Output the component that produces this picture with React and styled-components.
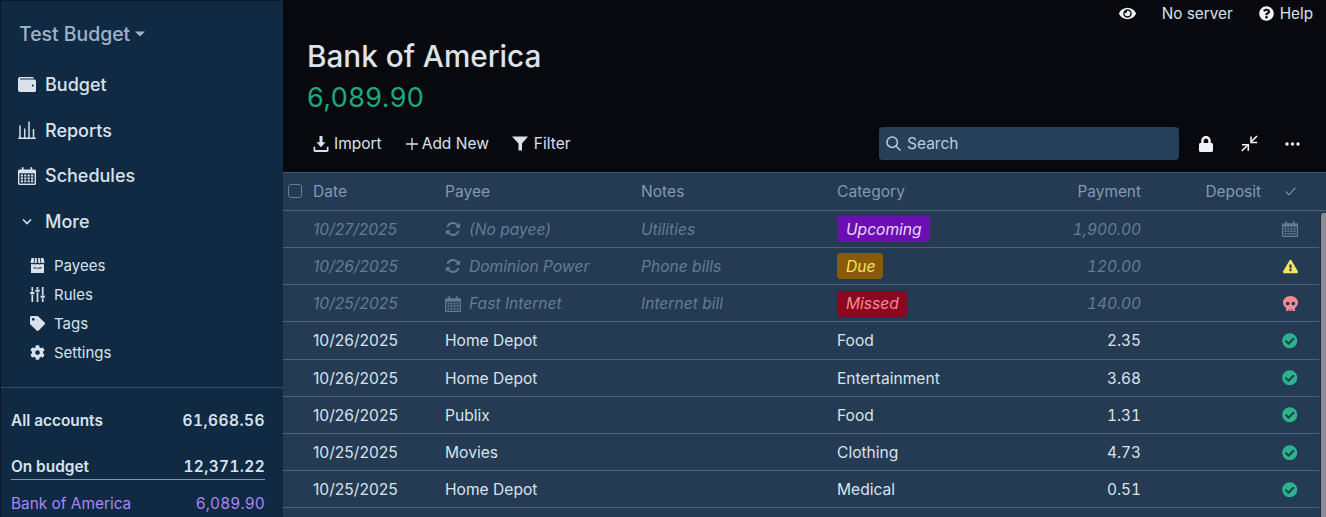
import React from "react";
import styled, { createGlobalStyle } from "styled-components";
import {
  FaEye,
  FaQuestionCircle,
  FaLock,
  FaTag,
  FaCog,
  FaCheckCircle,
  FaSkull,
  FaExclamationTriangle,
} from "react-icons/fa";

const GlobalStyle = createGlobalStyle`
  html, body {
    margin: 0;
    padding: 0;
    height: 100%;
    overflow: hidden;
    background: #08090f;
  }
  * { box-sizing: border-box; }
`;

const AppContainer = styled.div`
  font-family: Inter, "Noto Sans", sans-serif;
  display: flex;
  width: 1326px;
  height: 517px;
  overflow: hidden;
  background: #08090f;
`;

const Sidebar = styled.aside`
  width: 283px;
  flex: none;
  height: 100%;
  background: #102a43;
  border-left: 1px solid #0a1a2c;
  border-top: 1px solid #0a1a2c;
  display: flex;
  flex-direction: column;
`;

const BudgetName = styled.div`
  display: flex;
  align-items: center;
  gap: 5px;
  height: 45px;
  margin-top: 10px;
  padding-left: 18px;
  color: #9fb3c8;
  font-size: 19.4px;
  font-weight: 500;
`;

const NavList = styled.nav`
  display: flex;
  flex-direction: column;
  margin-top: 6px;
`;

const NavItem = styled.div`
  display: flex;
  align-items: center;
  height: 45.6px;
  padding-left: 17px;
  gap: 9px;
  color: #d9e2ec;
  font-size: 18px;
  font-weight: 500;
`;

const NavIcon = styled.span`
  width: 18px;
  height: 18px;
  display: flex;
  align-items: center;
  justify-content: center;
  color: #d9e2ec;
`;

const SubList = styled.div`
  display: flex;
  flex-direction: column;
  margin-top: 7px;
`;

const SubItem = styled.div`
  display: flex;
  align-items: center;
  height: 29px;
  padding-left: 29px;
  gap: 9px;
  color: #d9e2ec;
  font-size: 15px;
`;

const SubIcon = styled.span`
  width: 15px;
  height: 15px;
  display: flex;
  align-items: center;
  justify-content: center;
`;

const Accounts = styled.div`
  margin-top: 20px;
  border-top: 1px solid #334e68;
  padding: 20px 18px 0 10px;
  display: flex;
  flex-direction: column;
`;

const AccountRow = styled.div`
  display: flex;
  justify-content: space-between;
  align-items: center;
  height: ${(p) => p.$height || 24}px;
  margin-top: ${(p) => p.$top || 0}px;
  font-size: 15.4px;
  font-weight: ${(p) => (p.$bold ? 600 : 400)};
  color: ${(p) => (p.$active ? "#a985f5" : "#d9e2ec")};
  border-bottom: ${(p) => (p.$rule ? "1px solid #829ab1" : "none")};
`;

const Amount = styled.span`
  font-variant-numeric: tabular-nums;
  letter-spacing: ${(p) => p.$spacing}px;
`;

const Main = styled.main`
  flex: 1;
  min-width: 0;
  display: flex;
  flex-direction: column;
`;

const TopBar = styled.div`
  display: flex;
  justify-content: flex-end;
  align-items: center;
  height: 27px;
  color: #d9e2ec;
  font-size: 15.3px;
  padding-right: 13px;
`;

const TopIcon = styled.span`
  display: flex;
  margin-right: ${(p) => p.$gap}px;
  color: #f0f4f8;
`;

const ServerLabel = styled.span`
  margin-right: 26px;
`;

const Title = styled.h1`
  margin: 11px 0 0;
  padding-left: 24px;
  height: 36px;
  line-height: 36px;
  color: #dde3ea;
  font-size: 29.7px;
  font-weight: 500;
`;

const Balance = styled.div`
  padding-left: 24px;
  margin-top: 6px;
  height: 36px;
  line-height: 36px;
  color: #1ea97c;
  font-size: 27px;
  letter-spacing: 0.4px;
`;

const Toolbar = styled.div`
  display: flex;
  align-items: center;
  height: 33px;
  margin-top: 11px;
  padding: 0 24px 0 30px;
  color: #d9e2ec;
  font-size: 15.5px;
`;

const ToolButton = styled.span`
  display: flex;
  align-items: center;
  gap: ${(p) => p.$gap || 5}px;
  margin-right: ${(p) => p.$after || 23}px;
`;

const SearchBox = styled.div`
  margin-left: auto;
  width: 300px;
  height: 33px;
  border-radius: 4px;
  background: #27405a;
  display: flex;
  align-items: center;
  gap: 6px;
  padding-left: 7px;
  color: #bcccdc;
  font-size: 15.5px;
`;

const ToolIcons = styled.div`
  display: flex;
  align-items: center;
  margin-left: 19px;
  margin-right: 2px;
  gap: 27px;
  color: #f0f4f8;
`;

const Table = styled.div`
  margin-top: 12px;
  flex: 1;
  background: #243b53;
  border-top: 1px solid #3d5773;
  position: relative;
`;

const Row = styled.div`
  display: grid;
  grid-template-columns: 30px 132px 196px 196px 200px 104px 120px 58px;
  align-items: center;
  height: ${(p) => (p.$head ? 37.8 : 37.2)}px;
  padding-top: ${(p) => (p.$head ? 0 : 0.8)}px;
  margin-right: ${(p) => (p.$head ? 0 : 7)}px;
  border-bottom: 1px solid #48627f;
  font-size: 15.6px;
  font-style: ${(p) => (p.$dim ? "italic" : "normal")};
  color: ${(p) => (p.$head ? "#829ab1" : p.$dim ? "#627d98" : "#d9e2ec")};
`;

const Cell = styled.span`
  display: flex;
  align-items: center;
  gap: 8px;
  white-space: nowrap;
  font-size: ${(p) => (p.$right ? "15.4px" : "inherit")};
  font-variant-numeric: ${(p) => (p.$right ? "tabular-nums" : "normal")};
  justify-content: ${(p) => (p.$right ? "flex-end" : p.$center ? "center" : "flex-start")};
`;

const CheckBox = styled.span`
  width: 14px;
  height: 14px;
  margin-left: 5px;
  border: 1px solid #627d98;
  border-radius: 3px;
`;

const Pill = styled.span`
  padding: 2px 8px 2px 9px;
  border-radius: 4px;
  height: 26px;
  display: inline-flex;
  align-items: center;
  background: ${(p) => p.$bg};
  color: ${(p) => p.$fg};
`;

const Scrollbar = styled.div`
  position: absolute;
  right: 0;
  top: 40px;
  bottom: 0;
  width: 6px;
  border-left: 1px solid #1a2c40;
  background: #8a8d92;
  border-radius: 3px 0 0 0;
`;

const DimIcon = styled.span`
  display: flex;
  color: #627d98;
`;

const CheckedIcon = styled(FaCheckCircle)`
  color: #2bb389;
  font-size: 15.5px;
`;

const Wallet = () => (
  <svg width="18" height="15" viewBox="0 0 18 15" fill="currentColor">
    <path d="M2 0h13.500v1.600H2.400c-.5 0-.5.8 0 .8H16.500c.8 0 1.500.7 1.500 1.500V13.500c0 .8-.7 1.500-1.500 1.500H2C.9 15 0 14.100 0 13V2C0 .9.9 0 2 0z" />
    <circle cx="14.800" cy="8.600" r="1" fill="#102a43" />
  </svg>
);

const Bars = () => (
  <svg width="18" height="18" viewBox="0 0 18 18" fill="none" stroke="currentColor" strokeWidth="1.500">
    <path d="M.2 17.200h17.600M2 17V4.500M6.700 17V7.500M11 17V.5M15.500 17V8" />
  </svg>
);

const Calendar = ({ size = 18, hole = "#102a43" }) => (
  <svg width={size} height={size} viewBox="0 0 18 18" fill="currentColor">
    <path d="M3.800.2h1.800v2.300h6.800V.2h1.800v2.300h2.300c.8 0 1.500.7 1.500 1.500v12.500c0 .8-.7 1.500-1.500 1.500H1.500C.7 18 0 17.300 0 16.500V4c0-.8.7-1.500 1.500-1.500h2.300z" />
    <rect x="1.400" y="6.300" width="15.200" height="10.300" fill={hole} />
    {[2.800, 6.200, 9.600, 13].map((x) =>
      [7.500, 10.400, 13.300].map((y) => <rect key={`${x}-${y}`} x={x} y={y} width="2.200" height="2" />)
    )}
  </svg>
);

const Chevron = () => (
  <svg width="12" height="8" viewBox="0 0 12 8" fill="none" stroke="currentColor" strokeWidth="1.600">
    <path d="M2 1.500l4 4 4-4" />
  </svg>
);

const Store = () => (
  <svg width="15" height="15" viewBox="0 0 15 15" fill="currentColor">
    <path d="M1.500 0h2.800L3.700 4.500C2.900 5.400 1.300 5.400.5 4.500zM5.200 0h1.700v4.800c-.8.6-1.900.6-2.500 0zM8.100 0h1.700l.8 4.800c-.6.6-1.700.6-2.500 0zM10.700 0h2.800l1 4.500c-.8.9-2.400.9-3.200 0z" />
    <path fillRule="evenodd" d="M1 6.200c1 .3 1.900.2 2.700-.3.7.6 2.700.7 3.800 0 1.100.7 3.100.6 3.800 0 .8.500 1.700.6 2.700.3V15H1zM3.600 9v1.600h7.800V9.100c-2.400 1-5.400 1-7.800-.1z" />
  </svg>
);

const Sliders = () => (
  <svg width="15" height="15" viewBox="0 0 15 15" fill="none" stroke="currentColor" strokeWidth="1.700">
    <path d="M2.300 0v4.500M2.300 7.800V15M7.500 0v2M7.500 5.300V15M12.700 0v8M12.700 11.300V15" />
    <path d="M.2 6.100h4.200M5.400 3.600h4.200M10.600 9.600h4.200" strokeWidth="2.200" />
  </svg>
);

const Sync = () => (
  <svg width="16" height="16" viewBox="0 0 17 17" fill="none" stroke="currentColor" strokeWidth="2">
    <path d="M2.600 6.300A6.200 6.200 0 0 1 13.600 4.800M14.400 10.700A6.200 6.200 0 0 1 3.400 12.200" />
    <path d="M16 2v5.200h-5.200zM1 15V9.800h5.200z" fill="currentColor" stroke="none" />
  </svg>
);

const Download = () => (
  <svg width="16" height="16" viewBox="0 0 16 16" fill="currentColor">
    <path d="M6.500 0h3v6.200h3L8 11.200 3.500 6.200h3z" />
    <path d="M.5 10.800h1.700v3.200h11.600v-3.200h1.700v3.700c0 .8-.7 1.400-1.500 1.400H2c-.8 0-1.500-.6-1.500-1.400z" />
  </svg>
);

const Funnel = () => (
  <svg width="16" height="15" viewBox="0 0 16 15" fill="currentColor">
    <path d="M0 .5h16L10 7.500V14.500H6.500V7.500z" />
  </svg>
);

const Plus = () => (
  <svg width="12" height="12" viewBox="0 0 12 12" stroke="currentColor" strokeWidth="1.300">
    <path d="M6 0v12M0 6h12" />
  </svg>
);

const Search = () => (
  <svg width="15" height="15" viewBox="0 0 15 15" fill="none" stroke="currentColor" strokeWidth="1.500">
    <circle cx="6.200" cy="6.200" r="5.200" />
    <path d="M10 10l4.500 4.500" />
  </svg>
);

const Collapse = () => (
  <svg width="17" height="17" viewBox="0 0 17 17" fill="none" stroke="currentColor" strokeWidth="1.600">
    <path d="M16 1l-5.500 5.500M.8 16l5.500-5.500" />
    <path d="M10 1.500v6h6.200M1 9.800h6.300v6" />
  </svg>
);

const Dots = () => (
  <svg width="15" height="4" viewBox="0 0 15 4" fill="currentColor">
    <circle cx="2" cy="2" r="1.700" />
    <circle cx="7.500" cy="2" r="1.700" />
    <circle cx="13" cy="2" r="1.700" />
  </svg>
);

const Tick = () => (
  <svg width="11" height="9" viewBox="0 0 11 9" fill="none" stroke="#829ab1" strokeWidth="1.100">
    <path d="M.7 4.500l3.300 3.300L10.300.8" />
  </svg>
);

const scheduled = [
  { date: "10/27/2025", icon: <Sync />, payee: "(No payee)", notes: "Utilities", pill: ["Upcoming", "#6b0fb3", "#e9d8fd"], pay: "1,900.00", status: <DimIcon><Calendar size={16} hole="#243b53" /></DimIcon> },
  { date: "10/26/2025", icon: <Sync />, payee: "Dominion Power", notes: "Phone bills", pill: ["Due", "#8a5a0b", "#f7e463"], pay: "120.00", status: <FaExclamationTriangle color="#f7e463" size={15} /> },
  { date: "10/25/2025", icon: <Calendar size={16} hole="#243b53" />, payee: "Fast Internet", notes: "Internet bill", pill: ["Missed", "#8a0820", "#f88a96"], pay: "140.00", status: <FaSkull color="#f88a96" size={15} /> },
];

const transactions = [
  ["10/26/2025", "Home Depot", "Food", "2.35"],
  ["10/26/2025", "Home Depot", "Entertainment", "3.68"],
  ["10/26/2025", "Publix", "Food", "1.31"],
  ["10/25/2025", "Movies", "Clothing", "4.73"],
  ["10/25/2025", "Home Depot", "Medical", "0.51"],
];

export default function App() {
  return (
    <AppContainer>
      <GlobalStyle />
      <Sidebar>
        <BudgetName>
          Test Budget
          <svg width="10" height="6" viewBox="0 0 10 6" fill="currentColor"><path d="M0 .5h10L5 5.500z" /></svg>
        </BudgetName>
        <NavList>
          <NavItem><NavIcon><Wallet /></NavIcon>Budget</NavItem>
          <NavItem><NavIcon><Bars /></NavIcon>Reports</NavItem>
          <NavItem><NavIcon><Calendar /></NavIcon>Schedules</NavItem>
          <NavItem><NavIcon><Chevron /></NavIcon>More</NavItem>
        </NavList>
        <SubList>
          <SubItem><SubIcon><Store /></SubIcon>Payees</SubItem>
          <SubItem><SubIcon><Sliders /></SubIcon>Rules</SubItem>
          <SubItem><SubIcon><FaTag size={15} /></SubIcon>Tags</SubItem>
          <SubItem><SubIcon><FaCog size={15} /></SubIcon>Settings</SubItem>
        </SubList>
        <Accounts>
          <AccountRow $bold><span>All accounts</span><Amount $spacing={0.5}>61,668.56</Amount></AccountRow>
          <AccountRow $bold $rule $top={21} $height={27}><span>On budget</span><Amount $spacing={0.4}>12,371.22</Amount></AccountRow>
          <AccountRow $active $top={11}><span>Bank of America</span><Amount $spacing={0.15}>6,089.90</Amount></AccountRow>
        </Accounts>
      </Sidebar>
      <Main>
        <TopBar>
          <TopIcon $gap={26}><FaEye size={17} /></TopIcon>
          <ServerLabel>No server</ServerLabel>
          <TopIcon $gap={6}><FaQuestionCircle size={15} /></TopIcon>
          Help
        </TopBar>
        <Title>Bank of America</Title>
        <Balance>6,089.90</Balance>
        <Toolbar>
          <ToolButton $after={24}><Download />Import</ToolButton>
          <ToolButton $gap={4}><Plus />Add New</ToolButton>
          <ToolButton $gap={6}><Funnel />Filter</ToolButton>
          <SearchBox><Search />Search</SearchBox>
          <ToolIcons>
            <FaLock size={16} />
            <Collapse />
            <Dots />
          </ToolIcons>
        </Toolbar>
        <Table>
          <Row $head>
            <CheckBox />
            <Cell>Date</Cell>
            <Cell>Payee</Cell>
            <Cell>Notes</Cell>
            <Cell>Category</Cell>
            <Cell $right>Payment</Cell>
            <Cell $right>Deposit</Cell>
            <Cell $center><Tick /></Cell>
          </Row>
          {scheduled.map((r) => (
            <Row $dim key={r.payee}>
              <span />
              <Cell>{r.date}</Cell>
              <Cell>{r.icon}{r.payee}</Cell>
              <Cell>{r.notes}</Cell>
              <Cell><Pill $bg={r.pill[1]} $fg={r.pill[2]}>{r.pill[0]}</Pill></Cell>
              <Cell $right>{r.pay}</Cell>
              <span />
              <Cell $center>{r.status}</Cell>
            </Row>
          ))}
          {transactions.map((r, i) => (
            <Row key={i}>
              <span />
              <Cell>{r[0]}</Cell>
              <Cell>{r[1]}</Cell>
              <span />
              <Cell>{r[2]}</Cell>
              <Cell $right>{r[3]}</Cell>
              <span />
              <Cell $center><CheckedIcon /></Cell>
            </Row>
          ))}
          <Scrollbar />
        </Table>
      </Main>
    </AppContainer>
  );
}
